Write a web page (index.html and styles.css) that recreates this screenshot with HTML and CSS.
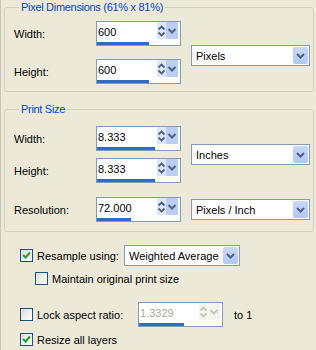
FILE: index.html
```html
<!DOCTYPE html>
<html lang="en">
	<head>
		<meta charset="UTF-8" />
		<title>Resize</title>
		<link rel="stylesheet" href="styles.css">
	</head>
	<body>
		<div class="dialog">
			<fieldset class="group group-pixels">
				<legend>Pixel Dimensions (61% x 81%)</legend>
				<div class="grid grid-pixels">
					<label class="label">Width:</label>
					<div class="spin">
						<div class="spin-top">
							<span class="value">600</span>
							<span class="spin-btns">
								<span class="btn-ud">
									<svg width="9" height="16" viewBox="0 0 9 16"><path d="M1.5 6.5L4.5 3.5L7.5 6.5M1.5 9.5L4.5 12.5L7.5 9.5" fill="none" stroke="#4d6185" stroke-width="1.8"/></svg>
								</span>
								<span class="btn-dn">
									<svg width="12" height="16" viewBox="0 0 12 16"><path d="M2.5 6L6 9.5L9.5 6" fill="none" stroke="#4d6185" stroke-width="2"/></svg>
								</span>
							</span>
						</div>
						<div class="bar" style="width: 52px"></div>
					</div>
					<div class="select select-span">
						<span>Pixels</span>
						<span class="drop"><svg width="15" height="17" viewBox="0 0 15 17"><path d="M4 7L7.5 10.5L11 7" fill="none" stroke="#4d6185" stroke-width="2"/></svg></span>
					</div>

					<label class="label">Height:</label>
					<div class="spin">
						<div class="spin-top">
							<span class="value">600</span>
							<span class="spin-btns">
								<span class="btn-ud">
									<svg width="9" height="16" viewBox="0 0 9 16"><path d="M1.5 6.5L4.5 3.5L7.5 6.5M1.5 9.5L4.5 12.5L7.5 9.5" fill="none" stroke="#4d6185" stroke-width="1.8"/></svg>
								</span>
								<span class="btn-dn">
									<svg width="12" height="16" viewBox="0 0 12 16"><path d="M2.5 6L6 9.5L9.5 6" fill="none" stroke="#4d6185" stroke-width="2"/></svg>
								</span>
							</span>
						</div>
						<div class="bar" style="width: 52px"></div>
					</div>
				</div>
			</fieldset>

			<fieldset class="group group-print">
				<legend>Print Size</legend>
				<div class="grid grid-print">
					<label class="label">Width:</label>
					<div class="spin">
						<div class="spin-top">
							<span class="value">8.333</span>
							<span class="spin-btns">
								<span class="btn-ud">
									<svg width="9" height="16" viewBox="0 0 9 16"><path d="M1.5 6.5L4.5 3.5L7.5 6.5M1.5 9.5L4.5 12.5L7.5 9.5" fill="none" stroke="#4d6185" stroke-width="1.8"/></svg>
								</span>
								<span class="btn-dn">
									<svg width="12" height="16" viewBox="0 0 12 16"><path d="M2.5 6L6 9.5L9.5 6" fill="none" stroke="#4d6185" stroke-width="2"/></svg>
								</span>
							</span>
						</div>
						<div class="bar" style="width: 58px"></div>
					</div>
					<div class="select select-span">
						<span>Inches</span>
						<span class="drop"><svg width="15" height="17" viewBox="0 0 15 17"><path d="M4 7L7.5 10.5L11 7" fill="none" stroke="#4d6185" stroke-width="2"/></svg></span>
					</div>

					<label class="label">Height:</label>
					<div class="spin">
						<div class="spin-top">
							<span class="value">8.333</span>
							<span class="spin-btns">
								<span class="btn-ud">
									<svg width="9" height="16" viewBox="0 0 9 16"><path d="M1.5 6.5L4.5 3.5L7.5 6.5M1.5 9.5L4.5 12.5L7.5 9.5" fill="none" stroke="#4d6185" stroke-width="1.8"/></svg>
								</span>
								<span class="btn-dn">
									<svg width="12" height="16" viewBox="0 0 12 16"><path d="M2.5 6L6 9.5L9.5 6" fill="none" stroke="#4d6185" stroke-width="2"/></svg>
								</span>
							</span>
						</div>
						<div class="bar" style="width: 58px"></div>
					</div>

					<label class="label row-res">Resolution:</label>
					<div class="spin row-res">
						<div class="spin-top">
							<span class="value">72.000</span>
							<span class="spin-btns">
								<span class="btn-ud">
									<svg width="9" height="16" viewBox="0 0 9 16"><path d="M1.5 6.5L4.5 3.5L7.5 6.5M1.5 9.5L4.5 12.5L7.5 9.5" fill="none" stroke="#4d6185" stroke-width="1.8"/></svg>
								</span>
								<span class="btn-dn">
									<svg width="12" height="16" viewBox="0 0 12 16"><path d="M2.5 6L6 9.5L9.5 6" fill="none" stroke="#4d6185" stroke-width="2"/></svg>
								</span>
							</span>
						</div>
						<div class="bar" style="width: 34px"></div>
					</div>
					<div class="select row-res">
						<span>Pixels / Inch</span>
						<span class="drop"><svg width="15" height="17" viewBox="0 0 15 17"><path d="M4 7L7.5 10.5L11 7" fill="none" stroke="#4d6185" stroke-width="2"/></svg></span>
					</div>
				</div>
			</fieldset>

			<div class="options">
				<div class="option option-resample">
					<span class="check checked"><svg width="11" height="11" viewBox="0 0 11 11"><path d="M2 5L4.5 7.5L9 2.5" fill="none" stroke="#21a121" stroke-width="2"/></svg></span>
					<span class="option-text">Resample using:</span>
					<div class="select select-method">
						<span>Weighted Average</span>
						<span class="drop"><svg width="15" height="17" viewBox="0 0 15 17"><path d="M4 7L7.5 10.5L11 7" fill="none" stroke="#4d6185" stroke-width="2"/></svg></span>
					</div>
				</div>
				<div class="option option-maintain">
					<span class="check"></span>
					<span class="option-text">Maintain original print size</span>
				</div>
				<div class="option option-lock">
					<span class="check"></span>
					<span class="option-text">Lock aspect ratio:</span>
					<div class="spin spin-disabled">
						<div class="spin-top">
							<span class="value">1.3329</span>
							<span class="spin-btns">
								<span class="btn-ud">
									<svg width="9" height="16" viewBox="0 0 9 16"><path d="M1.5 6.5L4.5 3.5L7.5 6.5M1.5 9.5L4.5 12.5L7.5 9.5" fill="none" stroke="#c9c7ba" stroke-width="1.8"/></svg>
								</span>
								<span class="btn-dn">
									<svg width="12" height="16" viewBox="0 0 12 16"><path d="M2.5 6L6 9.5L9.5 6" fill="none" stroke="#c9c7ba" stroke-width="2"/></svg>
								</span>
							</span>
						</div>
						<div class="bar" style="width: 45px"></div>
					</div>
					<span class="ratio-to">to 1</span>
				</div>
				<div class="option option-resize">
					<span class="check checked"><svg width="11" height="11" viewBox="0 0 11 11"><path d="M2 5L4.5 7.5L9 2.5" fill="none" stroke="#21a121" stroke-width="2"/></svg></span>
					<span class="option-text">Resize all layers</span>
				</div>
			</div>
		</div>
	</body>
</html>
```

FILE: styles.css
```css
:root {
	--face: #ece9d8;
	--group-border: #d0d0bf;
	--group-title: #0046d5;
	--field-border: #7f9db9;
	--bar: #316ac5;
	--arrow: #4d6185;
}

* {
	box-sizing: border-box;
}

body {
	margin: 0;
	background: var(--face);
	font-family: "Liberation Sans", Arial, sans-serif;
	font-size: 11px;
	color: #000;
}

.dialog {
	width: 316px;
	height: 350px;
	padding-top: 1px;
	border-left: 1px solid #c8c5b4;
}

.group {
	margin: 0 2px 0 3px;
	border: 1px solid var(--group-border);
	border-radius: 3px;
	padding: 0 3px 0 9px;
}

.group legend {
	color: var(--group-title);
	padding: 0 2px;
	margin-left: 5px;
	line-height: 13px;
	letter-spacing: -0.3px;
}

.group-pixels {
	padding-top: 7px;
	padding-bottom: 7px;
}

.group-print {
	margin-top: 11px;
	padding-top: 10px;
	padding-bottom: 9px;
}

.grid {
	display: grid;
	grid-template-columns: 72px 85px 1fr;
	column-gap: 10px;
	align-items: center;
}

.grid-pixels {
	row-gap: 13px;
}

.grid-pixels .select-span {
	margin-top: 6px;
}

.grid-print {
	row-gap: 7px;
}

.grid-print .row-res {
	margin-top: 7px;
}

.label {
	grid-column: 1;
}

.select-span {
	grid-column: 3;
	grid-row: 1 / span 2;
}

/* spin edit with bar */
.spin {
	width: 85px;
	height: 25px;
	border: 1px solid var(--field-border);
	background: #fff;
	display: flex;
	flex-direction: column;
}

.spin-top {
	flex: 1;
	display: flex;
	align-items: flex-start;
}

.value {
	padding: 4px 0 0 1px;
	line-height: 13px;
}

.spin-btns {
	margin: 0 2px 0 auto;
	display: flex;
	height: 17px;
}

.btn-ud,
.btn-dn {
	display: flex;
	align-items: center;
	justify-content: center;
}

.btn-ud {
	width: 9px;
	background: #dde7fb;
}

.btn-dn {
	width: 12px;
	background: #bccdf5;
	border-radius: 1px;
}

.bar {
	height: 3px;
	background: var(--bar);
}

.spin-disabled .value {
	color: #aca899;
}

.spin-disabled .btn-ud,
.spin-disabled .btn-dn {
	background: #f4f3ee;
}

/* dropdown */
.select {
	height: 21px;
	border: 1px solid var(--field-border);
	background: #fff;
	display: flex;
	align-items: center;
	padding-left: 4px;
}

.select .drop {
	margin: 0 1px 0 auto;
	width: 15px;
	height: 17px;
	background: linear-gradient(#c8d8fc, #b2c7f5);
	border-radius: 2px;
	display: flex;
}

/* checkboxes */
.options {
	padding-left: 19px;
}

.option {
	display: flex;
	align-items: center;
}

.check {
	width: 13px;
	height: 13px;
	border: 1px solid #1c5180;
	background: linear-gradient(135deg, #dcdcd7, #fff);
	display: flex;
	align-items: center;
	justify-content: center;
	flex: none;
}

.option-text {
	margin-left: 4px;
}

.option-resample {
	margin-top: 13px;
	height: 21px;
}

.option-resample .option-text {
	width: 87px;
}

.select-method {
	width: 116px;
}

.option-maintain {
	margin-top: 6px;
	margin-left: 15px;
	height: 13px;
}

.option-lock {
	margin-top: 17px;
	height: 25px;
}

.option-lock .option-text {
	width: 101px;
}

.ratio-to {
	margin-left: 11px;
}

.option-resize {
	margin-top: 6px;
	height: 13px;
}
```
